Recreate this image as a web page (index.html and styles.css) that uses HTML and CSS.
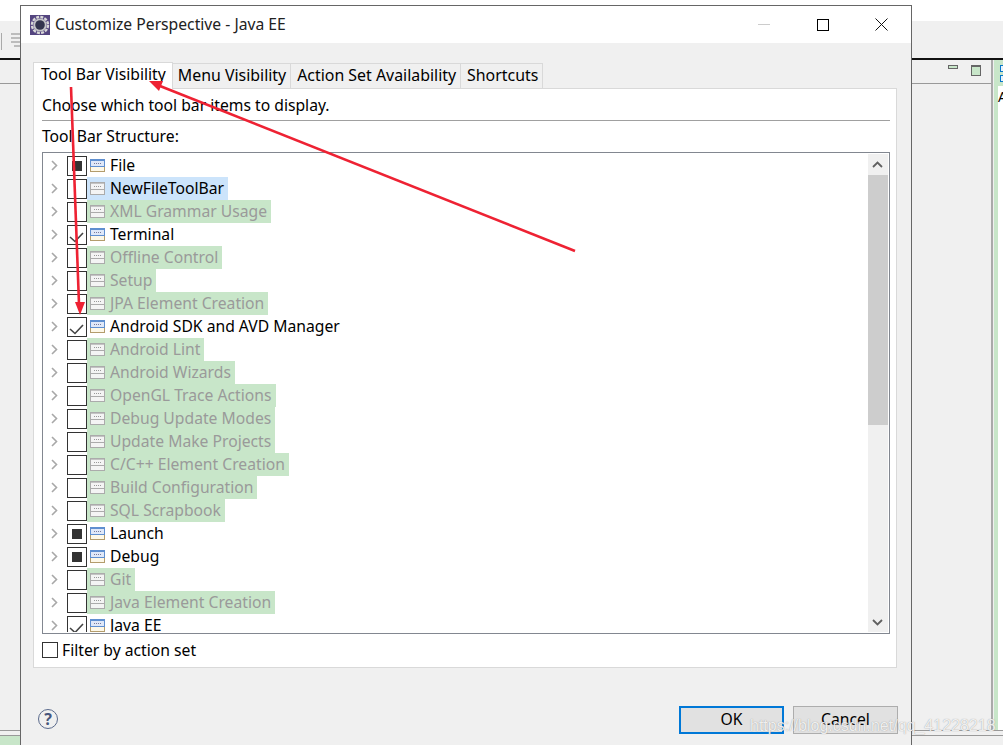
FILE: index.html
```html
<!DOCTYPE html>
<html>
<head>
    <title>Customize Perspective - Java EE</title>
    <link rel="stylesheet" href="styles.css">
</head>
<body>
    <svg class="defs">
        <symbol id="view-on" viewBox="0 0 15 13">
            <rect x="0.5" y="0.5" width="14" height="12" fill="#fdf8e8" stroke="#b39c6c"/>
            <rect x="0.5" y="0.5" width="14" height="7" fill="#dfe8f8" stroke="#5f8fd0"/>
            <path d="M1 1.5h13" stroke="#5f8fd0"/>
            <path d="M4 4.5h7" stroke="#7a7a9a" stroke-dasharray="1 1"/>
        </symbol>
        <symbol id="view-off" viewBox="0 0 15 13">
            <rect x="0.5" y="0.5" width="14" height="12" fill="#f4f4f4" stroke="#ababab"/>
            <path d="M1 7.5h13" stroke="#ababab"/>
            <path d="M1 1.5h13" stroke="#c4c4c4"/>
            <path d="M4 4.5h7" stroke="#999" stroke-dasharray="1 1"/>
        </symbol>
        <symbol id="chev" viewBox="0 0 7 11">
            <path d="M1 1l4.5 4.5L1 10" fill="none" stroke="#a8a8a8" stroke-width="1.6"/>
        </symbol>
        <symbol id="tick" viewBox="0 0 20 20">
            <path d="M3 12l5 4.5L16 8" fill="none" stroke="#444" stroke-width="1.6"/>
        </symbol>
    </svg>

    <!-- workbench behind the dialog -->
    <div class="workbench">
        <div class="wb-top"></div>
        <div class="wb-toolbar">
            <span class="wb-sep"></span>
            <svg class="wb-tool" width="10" height="14" viewBox="0 0 10 14"><path d="M0 1h10M0 5h10M0 9h10M3 13h7" stroke="#aaa" stroke-width="1.5"/></svg>
        </div>
        <div class="wb-main">
            <div class="wb-editor">
                <div class="wb-editor-head">
                    <span class="wb-min"></span>
                    <span class="wb-max"></span>
                </div>
            </div>
            <div class="wb-side">
                <div class="wb-side-head"><span class="wb-blue"></span><span class="wb-blue"></span></div>
                <div class="wb-side-body">A</div>
            </div>
        </div>
        <div class="wb-status"><span class="wb-status-left"></span></div>
    </div>

    <div class="dialog">
        <div class="titlebar">
            <svg class="app-icon" width="20" height="20" viewBox="0 0 20 20">
                <rect width="20" height="20" fill="#54457f"/>
                <circle cx="10" cy="10" r="8" fill="none" stroke="#d8d8d8" stroke-width="2.4" stroke-dasharray="3 1.2"/>
                <circle cx="10" cy="10" r="6.6" fill="#c4c4c8"/>
                <circle cx="10" cy="10" r="4.8" fill="#33344e"/>
            </svg>
            <span class="title">Customize Perspective - Java EE</span>
            <div class="win-btns">
                <span class="win-btn"><svg width="12" height="12" viewBox="0 0 12 12"><path d="M0 5.5h12" stroke="#ccc"/></svg></span>
                <span class="win-btn"><svg width="12" height="12" viewBox="0 0 12 12"><rect x="0.5" y="0.5" width="11" height="11" fill="none" stroke="#000"/></svg></span>
                <span class="win-btn"><svg width="13" height="13" viewBox="0 0 13 13"><path d="M0.5 0.5l12 12M12.5 0.5l-12 12" stroke="#111"/></svg></span>
            </div>
        </div>

        <div class="dialog-body">
            <div class="tabs">
                <div class="tab active">Tool Bar Visibility</div>
                <div class="tab">Menu Visibility</div>
                <div class="tab">Action Set Availability</div>
                <div class="tab">Shortcuts</div>
            </div>

            <div class="panel">
                <div class="intro">Choose which tool bar items to display.</div>
                <div class="rule"></div>
                <div class="tree-label">Tool Bar Structure:</div>

                <div class="tree">
                    <div class="tree-list">
                        <div class="row"><svg class="chev"><use href="#chev"/></svg><span class="check"><span class="square"></span></span><span class="item"><svg class="vicon"><use href="#view-on"/></svg>File</span></div>
                        <div class="row"><svg class="chev"><use href="#chev"/></svg><span class="check"></span><span class="item sel"><svg class="vicon"><use href="#view-off"/></svg>NewFileToolBar</span></div>
                        <div class="row"><svg class="chev"><use href="#chev"/></svg><span class="check"></span><span class="item found"><svg class="vicon"><use href="#view-off"/></svg>XML Grammar Usage</span></div>
                        <div class="row"><svg class="chev"><use href="#chev"/></svg><span class="check"><svg class="tick"><use href="#tick"/></svg></span><span class="item"><svg class="vicon"><use href="#view-on"/></svg>Terminal</span></div>
                        <div class="row"><svg class="chev"><use href="#chev"/></svg><span class="check"></span><span class="item found"><svg class="vicon"><use href="#view-off"/></svg>Offline Control</span></div>
                        <div class="row"><svg class="chev"><use href="#chev"/></svg><span class="check"></span><span class="item found"><svg class="vicon"><use href="#view-off"/></svg>Setup</span></div>
                        <div class="row"><svg class="chev"><use href="#chev"/></svg><span class="check"></span><span class="item found"><svg class="vicon"><use href="#view-off"/></svg>JPA Element Creation</span></div>
                        <div class="row"><svg class="chev"><use href="#chev"/></svg><span class="check"><svg class="tick"><use href="#tick"/></svg></span><span class="item"><svg class="vicon"><use href="#view-on"/></svg>Android SDK and AVD Manager</span></div>
                        <div class="row"><svg class="chev"><use href="#chev"/></svg><span class="check"></span><span class="item found"><svg class="vicon"><use href="#view-off"/></svg>Android Lint</span></div>
                        <div class="row"><svg class="chev"><use href="#chev"/></svg><span class="check"></span><span class="item found"><svg class="vicon"><use href="#view-off"/></svg>Android Wizards</span></div>
                        <div class="row"><svg class="chev"><use href="#chev"/></svg><span class="check"></span><span class="item found"><svg class="vicon"><use href="#view-off"/></svg>OpenGL Trace Actions</span></div>
                        <div class="row"><svg class="chev"><use href="#chev"/></svg><span class="check"></span><span class="item found"><svg class="vicon"><use href="#view-off"/></svg>Debug Update Modes</span></div>
                        <div class="row"><svg class="chev"><use href="#chev"/></svg><span class="check"></span><span class="item found"><svg class="vicon"><use href="#view-off"/></svg>Update Make Projects</span></div>
                        <div class="row"><svg class="chev"><use href="#chev"/></svg><span class="check"></span><span class="item found"><svg class="vicon"><use href="#view-off"/></svg>C/C++ Element Creation</span></div>
                        <div class="row"><svg class="chev"><use href="#chev"/></svg><span class="check"></span><span class="item found"><svg class="vicon"><use href="#view-off"/></svg>Build Configuration</span></div>
                        <div class="row"><svg class="chev"><use href="#chev"/></svg><span class="check"></span><span class="item found"><svg class="vicon"><use href="#view-off"/></svg>SQL Scrapbook</span></div>
                        <div class="row"><svg class="chev"><use href="#chev"/></svg><span class="check"><span class="square"></span></span><span class="item"><svg class="vicon"><use href="#view-on"/></svg>Launch</span></div>
                        <div class="row"><svg class="chev"><use href="#chev"/></svg><span class="check"><span class="square"></span></span><span class="item"><svg class="vicon"><use href="#view-on"/></svg>Debug</span></div>
                        <div class="row"><svg class="chev"><use href="#chev"/></svg><span class="check"></span><span class="item found"><svg class="vicon"><use href="#view-off"/></svg>Git</span></div>
                        <div class="row"><svg class="chev"><use href="#chev"/></svg><span class="check"></span><span class="item found"><svg class="vicon"><use href="#view-off"/></svg>Java Element Creation</span></div>
                        <div class="row"><svg class="chev"><use href="#chev"/></svg><span class="check"><svg class="tick"><use href="#tick"/></svg></span><span class="item"><svg class="vicon"><use href="#view-on"/></svg>Java EE</span></div>
                    </div>
                    <div class="scrollbar">
                        <div class="arrow"><svg width="11" height="7" viewBox="0 0 11 7"><path d="M1 6l4.5-4.5L10 6" fill="none" stroke="#606060" stroke-width="1.8"/></svg></div>
                        <div class="thumb"></div>
                        <div class="track"></div>
                        <div class="arrow arrow-down"><svg width="11" height="7" viewBox="0 0 11 7"><path d="M1 1l4.5 4.5L10 1" fill="none" stroke="#606060" stroke-width="1.8"/></svg></div>
                    </div>
                </div>

                <div class="filter"><span class="filter-box"></span>Filter by action set</div>
            </div>

            <div class="footer">
                <span class="help">?</span>
                <div class="buttons">
                    <button class="btn default">OK</button>
                    <button class="btn">Cancel</button>
                </div>
            </div>
        </div>
    </div>

    <!-- red annotation arrows drawn over the screenshot -->
    <svg class="arrows" width="1003" height="745" viewBox="0 0 1003 745">
        <path d="M71 87L79 304" stroke="#ee2233" stroke-width="2.6" fill="none"/>
        <path d="M80 315L75 302L85 302Z" fill="#ee2233"/>
        <path d="M575 251L160 86" stroke="#ee2233" stroke-width="2.6" fill="none"/>
        <path d="M149 81L163 81L159 91Z" fill="#ee2233"/>
    </svg>

    <div class="watermark">https://blog.csdn.net/qq_41228218</div>
</body>
</html>
```

FILE: styles.css
```css
html, body {
    margin: 0;
    padding: 0;
}

body {
    position: relative;
    width: 1003px;
    height: 745px;
    overflow: hidden;
    background-color: #fff;
    font-family: "Noto Sans", "Open Sans", sans-serif;
    font-size: 15.7px;
    color: #000;
}

.defs {
    position: absolute;
    width: 0;
    height: 0;
}

/* workbench */
.workbench {
    display: flex;
    flex-direction: column;
    height: 745px;
}

.wb-top {
    height: 21px;
}

.wb-toolbar {
    display: flex;
    align-items: flex-start;
    height: 39px;
    padding-top: 12px;
    box-sizing: border-box;
    background-color: #f0f0f0;
    border-bottom: 2px solid #111;
}

.wb-sep {
    width: 1px;
    height: 17px;
    margin-left: 1px;
    background-color: #aaa;
}

.wb-tool {
    margin-left: 9px;
}

.wb-main {
    display: flex;
    flex: 1;
    min-height: 0;
    background-color: #f0f0f0;
}

.wb-editor {
    flex-shrink: 0;
    width: 991px;
    border-right: 2px solid #aaa;
}

.wb-editor-head {
    display: flex;
    align-items: flex-start;
    justify-content: flex-end;
    gap: 13px;
    height: 18px;
    padding: 5px 10px 0 0;
    border-bottom: 1px solid #999;
}

.wb-min {
    width: 8px;
    height: 2px;
    border: 1px solid #666;
    background-color: #c8e6c9;
}

.wb-max {
    width: 8px;
    height: 8px;
    border: 1px solid #666;
    border-top-width: 2px;
    background-color: #c8e6c9;
}

.wb-side {
    display: flex;
    flex-direction: column;
    flex: 1;
    min-width: 0;
    margin-left: 1px;
    background-color: #c8e6c9;
}

.wb-side-head {
    display: flex;
    flex-direction: column;
    gap: 3px;
    height: 21px;
    padding: 5px 0 0 6px;
}

.wb-blue {
    width: 6px;
    height: 5px;
    border: 1px solid #0a78c8;
    background-color: #e8f2fa;
}

.wb-side-body {
    flex: 1;
    margin-left: 4px;
    background-color: #fff;
    font-size: 14px;
    line-height: 22px;
}

.wb-status {
    display: flex;
    flex-shrink: 0;
    height: 14px;
    border-top: 1px solid #999;
    background: linear-gradient(#f0f0f0 4px, #999 4px, #999 5px, #f0f0f0 5px);
}

.wb-status-left {
    width: 20px;
    height: 9px;
    margin-top: 5px;
    background-color: #c8e6c9;
}

/* dialog */
.dialog {
    position: absolute;
    left: 20px;
    top: 5px;
    width: 890px;
    height: 745px;
    display: flex;
    flex-direction: column;
    border: 1px solid #666;
    background-color: #f0f0f0;
}

.titlebar {
    display: flex;
    align-items: center;
    height: 37px;
    flex-shrink: 0;
    padding-left: 9px;
    background-color: #fff;
}

.app-icon {
    margin-right: 5px;
}

.title {
    margin-bottom: 2px;
    color: #222;
}

.win-btns {
    display: flex;
    margin-left: auto;
}

.win-btn {
    display: flex;
    align-items: center;
    justify-content: center;
    width: 59px;
    height: 37px;
}

.dialog-body {
    flex: 1;
    padding: 18px 14px 0 12px;
}

.tabs {
    display: flex;
    align-items: flex-end;
    height: 27px;
}

.tab {
    height: 24px;
    line-height: 23px;
    padding: 0 4px 0 5px;
    border: 1px solid #d9d9d9;
    border-left: none;
    border-bottom: none;
    font-size: 15.9px;
    white-space: nowrap;
}

.tab + .tab + .tab {
    padding-left: 6px;
}

.tab.active {
    position: relative;
    height: 26px;
    line-height: 23px;
    padding: 0 6px 0 7px;
    margin-bottom: -1px;
    border-left: 1px solid #d9d9d9;
    background-color: #fff;
    font-size: 15.7px;
}

.panel {
    height: 578px;
    padding: 0 6px 0 8px;
    border: 1px solid #d9d9d9;
    background-color: #fff;
}

.intro {
    height: 20px;
    line-height: 20px;
    margin-top: 6px;
}

.rule {
    height: 1px;
    margin-top: 5px;
    background-color: #a0a0a0;
}

.tree-label {
    height: 20px;
    line-height: 20px;
    margin-top: 5px;
}

.tree {
    display: flex;
    height: 478px;
    margin-top: 6px;
    padding: 1px;
    border: 1px solid #828790;
}

.tree-list {
    flex: 1;
    overflow: hidden;
}

.row {
    display: flex;
    align-items: center;
    height: 23px;
    padding-left: 7px;
}

.chev {
    width: 7px;
    height: 11px;
    margin-right: 9px;
}

.check {
    display: flex;
    align-items: center;
    justify-content: center;
    flex-shrink: 0;
    width: 18px;
    height: 18px;
    border: 1px solid #333;
    background-color: #fff;
}

.square {
    width: 10px;
    height: 10px;
    background-color: #333;
}

.tick {
    width: 20px;
    height: 20px;
    flex-shrink: 0;
}

.item {
    display: flex;
    align-items: center;
    gap: 5px;
    height: 23px;
    box-sizing: border-box;
    padding: 0 4px 2px 3px;
    white-space: nowrap;
}

.vicon {
    width: 15px;
    height: 13px;
    margin-top: 2px;
}

.item.sel {
    background-color: #cce4fb;
}

.item.found {
    background-color: #c8e6c9;
    color: #9a9a9a;
}

.scrollbar {
    display: flex;
    flex-direction: column;
    width: 20px;
    background-color: #f0f0f0;
}

.arrow {
    display: flex;
    align-items: center;
    justify-content: center;
    height: 21px;
    padding-right: 1px;
    flex-shrink: 0;
    box-sizing: border-box;
}

.arrow-down {
    padding-top: 2px;
}

.thumb {
    height: 250px;
    background-color: #cdcdcd;
}

.track {
    flex: 1;
}

.filter {
    display: flex;
    align-items: center;
    height: 20px;
    margin-top: 6px;
}

.filter-box {
    width: 14px;
    height: 14px;
    margin-right: 4px;
    border: 1px solid #333;
}

.footer {
    display: flex;
    align-items: flex-start;
    justify-content: space-between;
    margin-right: -1px;
    padding: 38px 0 0 5px;
}

.help {
    display: flex;
    align-items: center;
    justify-content: center;
    width: 18px;
    height: 18px;
    margin-top: 3px;
    border: 1.5px solid #5a6a8c;
    border-radius: 50%;
    font-weight: bold;
    font-size: 16px;
    color: #46567c;
}

.buttons {
    display: flex;
    gap: 9px;
}

.btn {
    width: 105px;
    height: 28px;
    padding: 0 0 2px;
    border: 1px solid #adadad;
    border-radius: 0;
    background-color: #e1e1e1;
    font-family: inherit;
    font-size: 15.7px;
    color: #000;
}

.btn.default {
    border: 2px solid #0078d7;
}

/* overlays */
.arrows {
    position: absolute;
    left: 0;
    top: 0;
}

.watermark {
    position: absolute;
    left: 750px;
    top: 714px;
    font-family: "Liberation Sans", Arial, sans-serif;
    font-size: 16px;
    line-height: 24px;
    color: rgba(255, 255, 255, 0.85);
    text-shadow: 0 0 1px rgba(120, 120, 120, 0.8);
    white-space: nowrap;
}
```
